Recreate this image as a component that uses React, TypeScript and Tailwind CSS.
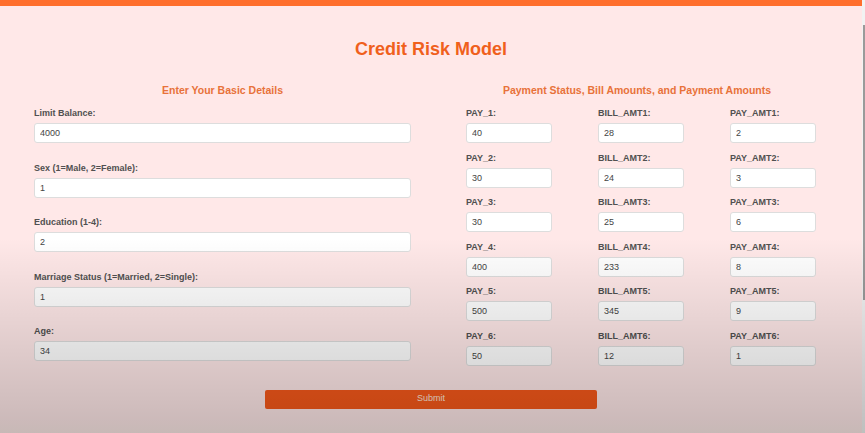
import React from "react";

const basic = [
  { label: "Limit Balance:", value: "4000" },
  { label: "Sex (1=Male, 2=Female):", value: "1" },
  { label: "Education (1-4):", value: "2" },
  { label: "Marriage Status (1=Married, 2=Single):", value: "1" },
  { label: "Age:", value: "34" },
];

const pay = ["40", "30", "30", "400", "500", "50"];
const bill = ["28", "24", "25", "233", "345", "12"];
const payAmt = ["2", "3", "6", "8", "9", "1"];

function Field({ label, value, w }: { label: string; value: string; w: string }) {
  return (
    <div className="flex flex-col">
      <label className="h-[12px] text-[9px] font-bold leading-[12px] text-[#505050]">{label}</label>
      <input
        readOnly
        value={value}
        className={`mt-[4px] h-[20px] ${w} rounded-[3px] border border-[#ddd] bg-white px-[5px] text-[9px] text-[#444] outline-none`}
      />
    </div>
  );
}

export default function App() {
  const rows = pay.map((p, i) => [
    { label: `PAY_${i + 1}:`, value: p },
    { label: `BILL_AMT${i + 1}:`, value: bill[i] },
    { label: `PAY_AMT${i + 1}:`, value: payAmt[i] },
  ]);

  return (
    <div
      className="relative flex h-[433px] w-[865px] overflow-hidden bg-[#ffe8e8]"
      style={{ fontFamily: '"Liberation Sans", Arial, sans-serif' }}
    >
      <div className="flex w-[862px] flex-col">
        <div className="h-[6px] bg-[#ff6e2c]" />
        <h1 className="mt-[32px] text-center text-[18px] font-bold leading-[22px] text-[#f0601c]">
          Credit Risk Model
        </h1>

        <div className="mt-[23px] flex">
          <div className="ml-[34px] w-[377px]">
            <h2 className="mb-[10px] text-center text-[10.5px] font-bold leading-[14px] text-[#e8723a]">
              Enter Your Basic Details
            </h2>
            <div className="flex flex-col gap-[18.5px]">
              {basic.map((f) => (
                <Field key={f.label} label={f.label} value={f.value} w="w-full" />
              ))}
            </div>
          </div>

          <div className="ml-[55px] w-[350px]">
            <h2 className="mb-[10px] pr-[8px] text-center text-[10.5px] font-bold leading-[14px] text-[#e8723a]">
              Payment Status, Bill Amounts, and Payment Amounts
            </h2>
            <div className="grid grid-cols-[86px_86px_86px] gap-x-[46px] gap-y-[8.5px]">
              {rows.flat().map((f) => (
                <Field key={f.label} label={f.label} value={f.value} w="w-[86px]" />
              ))}
            </div>
          </div>
        </div>

        <div className="mt-[24px] flex justify-center">
          <button className="h-[19px] w-[332px] rounded-[2px] bg-[#f5581a] text-[9px] text-[#ffe6d8]">
            Submit
          </button>
        </div>
      </div>

      <div className="flex w-[3px] flex-col bg-[#f2f2f2]">
        <div className="ml-[1px] mt-[25px] h-[275px] w-[2px] bg-[#9a9a9a]" />
      </div>

      <div className="pointer-events-none absolute inset-0 bg-[linear-gradient(to_bottom,transparent_0%,transparent_55%,rgba(0,0,0,0.12)_80%,rgba(0,0,0,0.2)_97%,rgba(40,50,40,0.26)_100%)]" />
    </div>
  );
}
